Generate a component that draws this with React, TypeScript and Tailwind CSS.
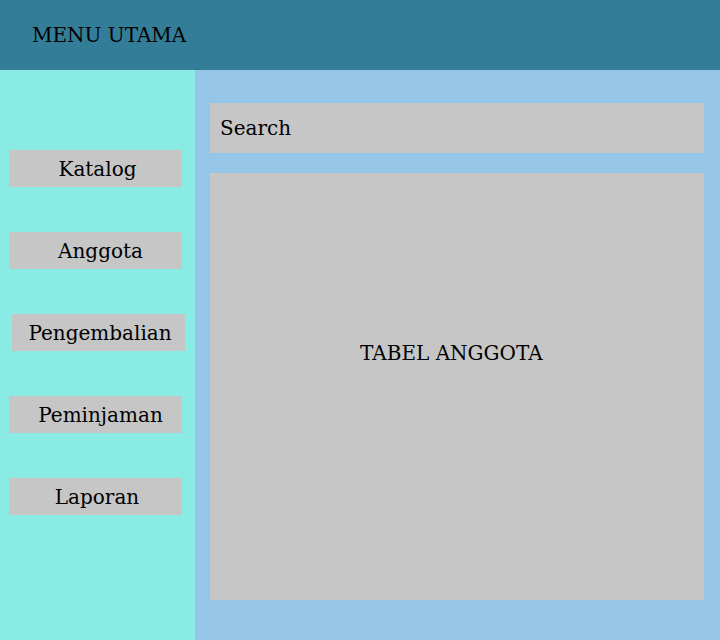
import React from 'react'

const menus = [
  { label: 'Katalog', shift: 'ml-[9px] pl-[4px]' },
  { label: 'Anggota', shift: 'ml-[9px] pl-[10px]' },
  { label: 'Pengembalian', shift: 'ml-[12px] pl-[3px]' },
  { label: 'Peminjaman', shift: 'ml-[9px] pl-[10px]' },
  { label: 'Laporan', shift: 'ml-[9px] pl-[3px]' },
]

export default function App() {
  return (
    <div className="flex h-[640px] w-full flex-col font-['DejaVu_Serif',serif] text-[20px] text-black">
      <header className="flex h-[70px] shrink-0 items-center bg-[#347d99] pl-8">
        <span>MENU UTAMA</span>
      </header>

      <div className="flex flex-1">
        <aside className="flex w-[195px] shrink-0 flex-col gap-[45px] bg-[#8aebe5] pt-[80px]">
          {menus.map((m) => (
            <div
              key={m.label}
              className={`flex h-[37px] w-[173px] items-center justify-center bg-[#c6c6c6] ${m.shift}`}
            >
              {m.label}
            </div>
          ))}
        </aside>

        <main className="flex flex-1 flex-col gap-5 bg-[#95c5e7] pb-10 pl-[15px] pr-4 pt-[33px]">
          <div className="flex h-[50px] items-center bg-[#c6c6c6] pl-[10px]">Search</div>
          <div className="flex-1 bg-[#c6c6c6] pl-[150px] pt-[165px]">TABEL ANGGOTA</div>
        </main>
      </div>
    </div>
  )
}
